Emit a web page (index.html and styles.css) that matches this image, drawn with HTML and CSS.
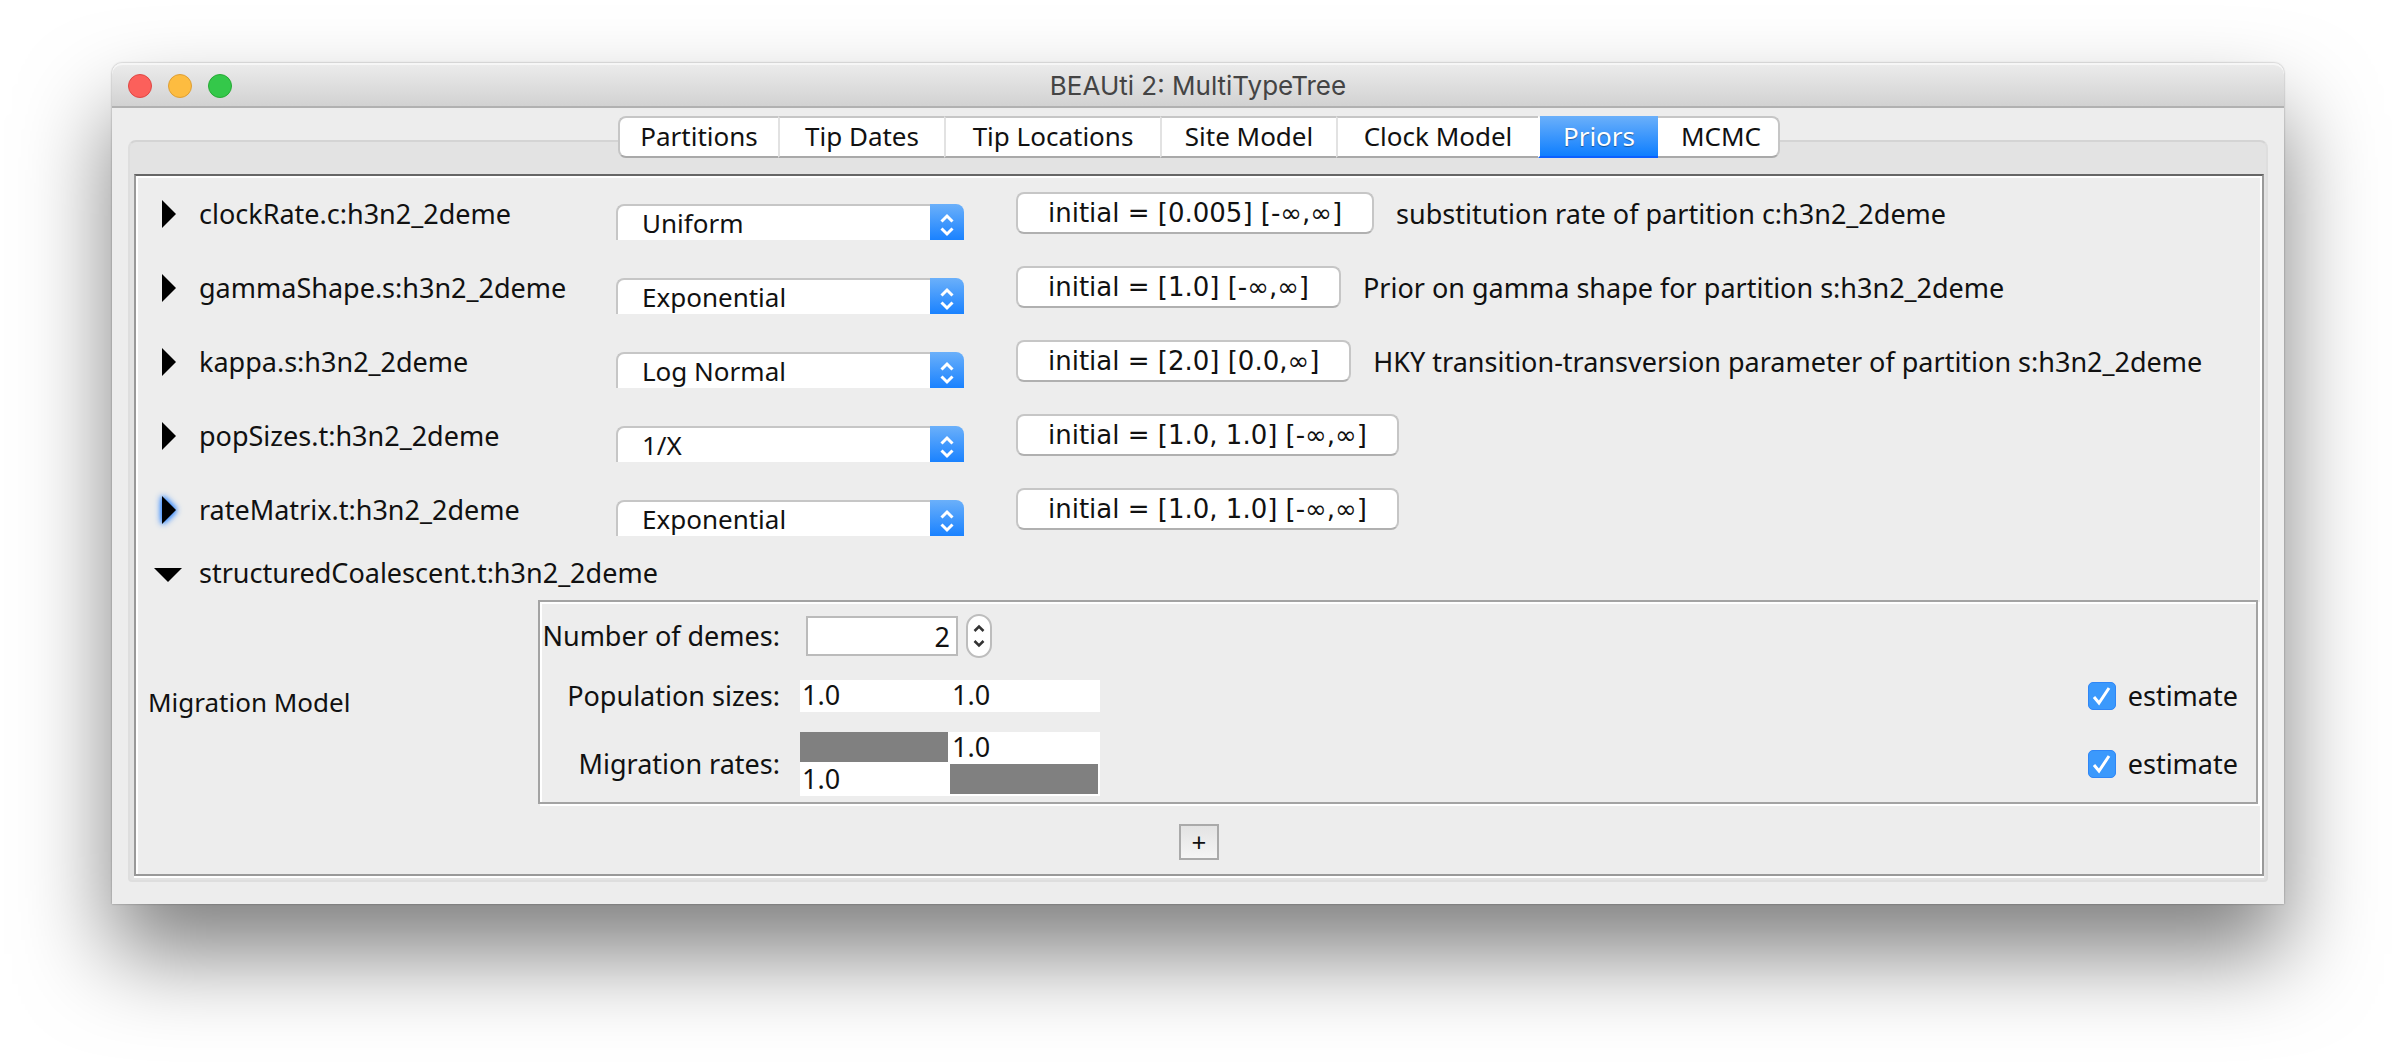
FILE: index.html
```
<!DOCTYPE html>
<html lang="en">
<head>
<meta charset="utf-8">
<title>BEAUti 2: MultiTypeTree</title>
<link rel="stylesheet" href="styles.css">
</head>
<body>
<svg class="defs" aria-hidden="true">
  <symbol id="closed" viewBox="0 0 14 28"><path d="M0 0 14 14 0 28Z"/></symbol>
  <symbol id="open" viewBox="0 0 28 14"><path d="M0 0H28L14 14Z"/></symbol>
  <symbol id="updown" viewBox="0 0 14 24"><path d="M1.500 8.500 7 3 12.500 8.500M1.500 15.500 7 21 12.500 15.500" fill="none" stroke="currentColor" stroke-width="3"/></symbol>
  <symbol id="step" viewBox="0 0 14 26"><path d="M2.500 8 7 3.500 11.500 8M2.500 18 7 22.500 11.500 18" fill="none" stroke="currentColor" stroke-width="2.500"/></symbol>
</svg>
<main class="window">
  <header class="titlebar">
    <div class="lights">
      <button class="light close" aria-label="Close"></button>
      <button class="light minimise" aria-label="Minimise"></button>
      <button class="light zoom" aria-label="Zoom"></button>
    </div>
    <h1 class="title">BEAUti 2: MultiTypeTree</h1>
  </header>
  <nav class="tabs">
    <button class="tab">Partitions</button>
    <button class="tab">Tip Dates</button>
    <button class="tab">Tip Locations</button>
    <button class="tab">Site Model</button>
    <button class="tab">Clock Model</button>
    <button class="tab active">Priors</button>
    <button class="tab">MCMC</button>
  </nav>
  <div class="frame">
    <section class="panel">
      <div class="prior">
        <button class="toggle" aria-label="Expand clockRate"><svg class="closed"><use href="#closed"/></svg></button>
        <label class="name" for="p1">clockRate.c:h3n2_2deme</label>
        <div class="combo"><select id="p1"><option>Uniform</option></select><span class="arrows"><svg><use href="#updown"/></svg></span></div>
        <div class="detail"><button class="initial">initial = [0.005] [-∞,∞]</button><span>substitution rate of partition c:h3n2_2deme</span></div>
      </div>
      <div class="prior">
        <button class="toggle" aria-label="Expand gammaShape"><svg class="closed"><use href="#closed"/></svg></button>
        <label class="name" for="p2">gammaShape.s:h3n2_2deme</label>
        <div class="combo"><select id="p2"><option>Exponential</option></select><span class="arrows"><svg><use href="#updown"/></svg></span></div>
        <div class="detail"><button class="initial">initial = [1.0] [-∞,∞]</button><span>Prior on gamma shape for partition s:h3n2_2deme</span></div>
      </div>
      <div class="prior">
        <button class="toggle" aria-label="Expand kappa"><svg class="closed"><use href="#closed"/></svg></button>
        <label class="name" for="p3">kappa.s:h3n2_2deme</label>
        <div class="combo"><select id="p3"><option>Log Normal</option></select><span class="arrows"><svg><use href="#updown"/></svg></span></div>
        <div class="detail"><button class="initial">initial = [2.0] [0.0,∞]</button><span>HKY transition-transversion parameter of partition s:h3n2_2deme</span></div>
      </div>
      <div class="prior">
        <button class="toggle" aria-label="Expand popSizes"><svg class="closed"><use href="#closed"/></svg></button>
        <label class="name" for="p4">popSizes.t:h3n2_2deme</label>
        <div class="combo"><select id="p4"><option>1/X</option></select><span class="arrows"><svg><use href="#updown"/></svg></span></div>
        <div class="detail"><button class="initial">initial = [1.0, 1.0] [-∞,∞]</button></div>
      </div>
      <div class="prior">
        <button class="toggle focused" aria-label="Expand rateMatrix"><svg class="closed"><use href="#closed"/></svg></button>
        <label class="name" for="p5">rateMatrix.t:h3n2_2deme</label>
        <div class="combo"><select id="p5"><option>Exponential</option></select><span class="arrows"><svg><use href="#updown"/></svg></span></div>
        <div class="detail"><button class="initial">initial = [1.0, 1.0] [-∞,∞]</button></div>
      </div>
      <div class="prior expanded">
        <button class="toggle" aria-label="Collapse structuredCoalescent"><svg class="open"><use href="#open"/></svg></button>
        <span class="name">structuredCoalescent.t:h3n2_2deme</span>
      </div>
      <div class="model">
        <h2 class="model-name">Migration Model</h2>
        <div class="model-box">
          <div class="field demes">
            <label for="demes">Number of demes:</label>
            <div class="spinner">
              <input id="demes" type="text" value="2">
              <button class="stepper" aria-label="Step"><svg><use href="#step"/></svg></button>
            </div>
          </div>
          <div class="field sizes">
            <span>Population sizes:</span>
            <table class="matrix"><tr><td>1.0</td><td>1.0</td></tr></table>
            <label class="estimate"><input type="checkbox" checked>estimate</label>
          </div>
          <div class="field rates">
            <span>Migration rates:</span>
            <table class="matrix"><tr><td class="off"></td><td>1.0</td></tr><tr><td>1.0</td><td class="off"></td></tr></table>
            <label class="estimate"><input type="checkbox" checked>estimate</label>
          </div>
        </div>
      </div>
      <button class="add">+</button>
    </section>
  </div>
</main>
</body>
</html>
```
FILE: styles.css
```
* { box-sizing: border-box; }

body {
  margin: 0;
  padding: 63px 112px 160px;
  background: #fff;
  color: #111;
  font: 26px/32px "Noto Sans", "Open Sans", sans-serif;
}

button, input, select { font: inherit; color: inherit; margin: 0; padding: 0; }
h1, h2 { margin: 0; font-weight: 400; font-size: inherit; }
.defs { display: none; }

.window {
  display: flex;
  flex-direction: column;
  background: #ededed;
  border-radius: 10px 10px 0 0;
  box-shadow: 0 0 2px rgba(0, 0, 0, .4), 0 50px 90px rgba(0, 0, 0, .5);
}

.titlebar {
  display: grid;
  grid-template-columns: 1fr auto 1fr;
  align-items: center;
  height: 45px;
  padding: 2px 16px 0;
  border-bottom: 2px solid #b1b1b1;
  border-radius: 10px 10px 0 0;
  background: linear-gradient(#ececec, #d2d2d2);
  box-shadow: inset 0 2px #f6f6f6;
}
.lights { display: flex; gap: 16px; }
.light { width: 24px; height: 24px; border: 1px solid; border-radius: 50%; }
.close { background: #fc605b; border-color: #df4744; }
.minimise { background: #fdbc40; border-color: #de9f34; }
.zoom { background: #34c84a; border-color: #27aa35; }
.title { color: #444; font: 26px/32px Inter, Roboto, sans-serif; }

.tabs {
  display: grid;
  grid-template-columns: 160px 166px 216px 176px 202px 120px 122px;
  align-self: center;
  position: relative;
  z-index: 1;
  margin: 8px 0 -18px 2px;
}
.tab {
  height: 42px;
  padding-bottom: 2px;
  border: 2px solid #c6c6c6;
  border-bottom-color: #a9a9a9;
  border-left-color: #e2e2e2;
  border-right: 0;
  background: #fff;
  line-height: 36px;
}
.tab:first-child { border-left-color: #c6c6c6; border-radius: 8px 0 0 8px; }
.tab:last-child {
  padding-left: 6px;
  border-left: 0;
  border-right: 2px solid #c6c6c6;
  border-radius: 0 8px 8px 0;
}
.tab.active {
  border-color: transparent;
  border-left-color: #fff;
  border-bottom-color: #0a60ff;
  background: linear-gradient(#6bb0fa, #0a7cff) border-box;
  color: #fff;
  text-shadow: 0 1px 1px rgba(0, 0, 0, .4);
}

.frame {
  margin: 0 16px 22px;
  padding: 32px 2px 4px 4px;
  border: 2px solid #dedede;
  border-top-color: #d4d4d4;
  border-radius: 8px 8px 4px 4px;
  background: #e3e3e3;
}
.panel {
  display: flex;
  flex-direction: column;
  padding: 2px 2px 14px;
  border: 2px solid #999;
  border-top-color: #666;
  background: #ededed;
  box-shadow: inset 2px 2px #fff, inset -2px 0 #fff, 0 2px #fff;
}

.prior {
  display: grid;
  grid-template-columns: 61px 417px 400px 1fr;
  height: 74px;
  padding-top: 14px;
}
.toggle {
  display: flex;
  align-items: center;
  height: 44px;
  padding-left: 24px;
  border: 0;
  background: none;
}
.toggle svg { fill: #000; }
.closed { width: 14px; height: 28px; }
.open { width: 28px; height: 14px; }
.focused svg { overflow: visible; filter: drop-shadow(0 0 3px #3b8dff) drop-shadow(0 0 2px #3b8dff); }
.name { padding-top: 6px; font-size: 27px; white-space: nowrap; }

.combo {
  display: flex;
  width: 348px;
  height: 36px;
  margin-top: 12px;
}
.combo select {
  appearance: none;
  flex: 1;
  height: 36px;
  padding-left: 24px;
  border: 2px solid #c6c6c6;
  border-width: 2px 0 0 2px;
  border-radius: 8px 0 0 0;
  background: #fff;
}
.arrows {
  display: flex;
  justify-content: center;
  width: 34px;
  padding-top: 9px;
  border-radius: 0 8px 0 0;
  background: linear-gradient(#6bb0fa, #1a82ff);
  color: #fff;
}
.arrows svg { width: 14px; height: 24px; }

.detail { display: flex; gap: 22px; white-space: nowrap; font-size: 27px; }
.detail span { padding-top: 6px; }
.initial {
  height: 42px;
  padding: 0 30px;
  border: 2px solid #c6c6c6;
  border-bottom-color: #b0b0b0;
  border-radius: 8px;
  background: #fff;
  font: 26px/36px "DejaVu Sans", sans-serif;
}

.expanded { height: 52px; padding-top: 9px; grid-template-columns: 61px 1fr; }
.expanded .toggle { height: 36px; padding-left: 16px; }
.expanded .name { padding-top: 0; }

.model { display: grid; grid-template-columns: 390px 1fr; align-items: center; padding: 0 2px 0 10px; }
.model-box {
  padding: 6px 18px 2px 4px;
  border: 2px solid #a3a3a3;
  box-shadow: inset 2px 2px #fff, 2px 2px #fff;
}
.field {
  display: grid;
  grid-template-columns: 252px 1fr auto;
  align-items: center;
  font-size: 27px;
  white-space: nowrap;
}
.field > :first-child { justify-self: end; margin-right: 16px; }
.demes { height: 56px; }
.sizes { height: 64px; }
.rates { height: 72px; }

.spinner { display: flex; align-items: center; gap: 8px; padding-left: 10px; }
.spinner input {
  width: 152px;
  height: 40px;
  padding: 0 6px;
  border: 2px solid #bbb;
  background: #fff;
  text-align: right;
}
.stepper {
  display: grid;
  place-items: center;
  width: 26px;
  height: 44px;
  border: 2px solid #bdbdbd;
  border-radius: 13px;
  background: #fff;
}
.stepper svg { width: 14px; height: 26px; color: #333; }

.matrix {
  width: 300px;
  margin-left: 4px;
  border-spacing: 0;
  table-layout: fixed;
  background: #fff;
  font-size: 27px;
}
.matrix td { height: 32px; padding: 0 2px; line-height: 30px; vertical-align: top; }
.matrix .off {
  border: solid #fff;
  border-width: 0 2px 2px 0;
  background: #808080;
}

.estimate { display: flex; align-items: center; gap: 12px; }
.estimate input {
  appearance: none;
  width: 28px;
  height: 28px;
  border: 1px solid #2f86f6;
  border-radius: 5px;
  background: #3b99fc url("data:image/svg+xml,%3Csvg xmlns='http://www.w3.org/2000/svg' viewBox='0 0 28 28'%3E%3Cpath d='M6 15l5 6L21 6' fill='none' stroke='white' stroke-width='3'/%3E%3C/svg%3E") center / 28px;
}

.add {
  align-self: center;
  width: 40px;
  height: 36px;
  margin-top: 20px;
  border: 2px solid #aaa;
  background: linear-gradient(#e3e3e3, #f5f5f5);
}
```
